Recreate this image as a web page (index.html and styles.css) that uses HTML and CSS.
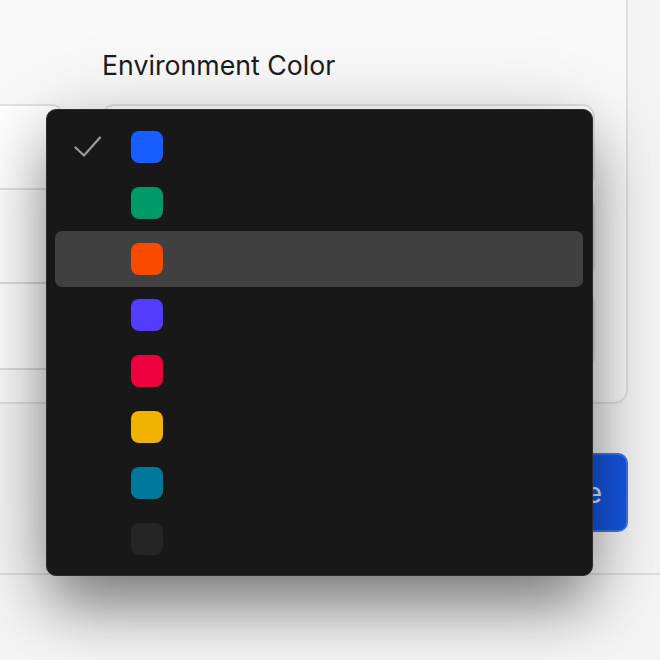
FILE: index.html
```html
<!DOCTYPE html>
<html lang="en">
<head>
<meta charset="utf-8">
<title>Environment Color</title>
<link rel="stylesheet" href="styles.css">
</head>
<body>
<div class="page">
  <section class="card">
    <div class="form-row">
      <div class="col col-left">
        <div class="label">Name</div>
        <div class="field field-first"></div>
        <div class="field field-line"></div>
        <div class="field field-line"></div>
      </div>
      <div class="col col-right">
        <div class="label">Environment Color</div>
        <div class="box box-a"></div>
        <div class="box box-b"></div>
        <div class="box box-c"></div>
      </div>
    </div>
  </section>
  <div class="actions">
    <button class="btn-primary" type="button">Save</button>
  </div>
  <div class="footer-line"></div>

  <div class="menu" role="listbox">
    <div class="option">
      <span class="check"><svg width="28" height="22" viewBox="0 0 28 22"><path d="M1.5 11.5 L10 19.5 L26 1.5" fill="none" stroke="#9b9b9b" stroke-width="2.2" stroke-linecap="round" stroke-linejoin="round"/></svg></span>
      <span class="swatch sw-blue"></span>
    </div>
    <div class="option"><span class="check"></span><span class="swatch sw-green"></span></div>
    <div class="option active"><span class="check"></span><span class="swatch sw-orange"></span></div>
    <div class="option"><span class="check"></span><span class="swatch sw-purple"></span></div>
    <div class="option"><span class="check"></span><span class="swatch sw-red"></span></div>
    <div class="option"><span class="check"></span><span class="swatch sw-yellow"></span></div>
    <div class="option"><span class="check"></span><span class="swatch sw-teal"></span></div>
    <div class="option"><span class="check"></span><span class="swatch sw-dark"></span></div>
  </div>
</div>
</body>
</html>
```

FILE: styles.css
```css
html, body {
  margin: 0;
  padding: 0;
  overflow: hidden;
}
body {
  background: #f4f4f4;
  font-family: Inter, "Noto Sans", sans-serif;
  color: #1c1c1c;
}
.page {
  position: relative;
  width: 660px;
  height: 660px;
}
.card {
  box-sizing: border-box;
  width: 640px;
  margin-left: -12px;
  padding: 49px 31px 32px 0;
  background: #f9f9f9;
  border-right: 2px solid #e0e0e0;
  border-bottom: 2px solid #e0e0e0;
  border-bottom-right-radius: 14px;
}
.form-row {
  display: flex;
  gap: 38px;
}
.col {
  display: flex;
  flex-direction: column;
}
.col-left {
  width: 76px;
}
.col-right {
  width: 493px;
}
.label {
  font-size: 26.7px;
  line-height: 32px;
  height: 32px;
  margin-bottom: 23px;
  white-space: nowrap;
  color: #1c1c1c;
}
.col-left .label {
  visibility: hidden;
}
.field {
  box-sizing: border-box;
  background: #fdfdfd;
}
.field-first {
  height: 86px;
  border: 2px solid #e2e2e2;
  border-left: none;
  border-top-right-radius: 12px;
  background: #ffffff;
}
.field-line {
  height: 94px;
  border-bottom: 2px solid #dcdcdc;
}
.field-line + .field-line {
  height: 86px;
}
.box {
  box-sizing: border-box;
  border: 2px solid #e2e2e2;
  border-radius: 12px;
  background: #ffffff;
}
.box-a { height: 82px; }
.box-b { height: 82px; margin-top: 11px; }
.box-c { height: 78px; margin-top: 11px; }

.actions {
  width: 628px;
  display: flex;
  justify-content: flex-end;
  margin-top: 49px;
}
.btn-primary {
  box-sizing: border-box;
  height: 79px;
  padding: 0 24px 0 40px;
  border: 2px solid #3a76f0;
  border-radius: 10px;
  background: #1557e3;
  color: #e3eaff;
  font-family: Inter, "Noto Sans", sans-serif;
  font-size: 28px;
}
.footer-line {
  margin-top: 41px;
  border-top: 2px solid #dedede;
}

.menu {
  position: absolute;
  left: 46px;
  top: 109px;
  box-sizing: border-box;
  width: 547px;
  height: 467px;
  padding: 9px 9px 9px 8px;
  background: #181818;
  border: 1px solid #2c2c2c;
  border-radius: 10px;
  box-shadow: 0 34px 60px -6px rgba(0, 0, 0, 0.42), 0 12px 90px rgba(0, 0, 0, 0.2);
}
.option {
  display: flex;
  align-items: center;
  height: 56px;
  padding-left: 19px;
  border-radius: 7px;
}
.option.active {
  background: #404040;
}
.check {
  display: flex;
  align-items: center;
  width: 57px;
  height: 22px;
}
.swatch {
  width: 32px;
  height: 32px;
  border-radius: 8px;
}
.sw-blue { background: #185dfd; }
.sw-green { background: #00996a; }
.sw-orange { background: #f84b00; }
.sw-purple { background: #543cfd; }
.sw-red { background: #ef003e; }
.sw-yellow { background: #f1b200; }
.sw-teal { background: #00789b; }
.sw-dark { background: #252525; }
```
